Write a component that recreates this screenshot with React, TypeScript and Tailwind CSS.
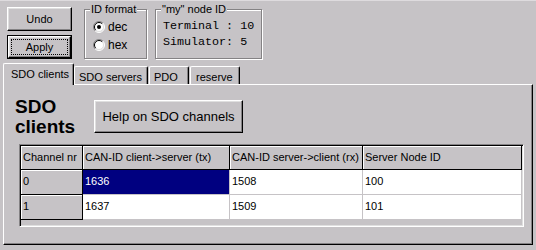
import React from "react";

const raised =
  "border border-t-white border-l-white border-r-black border-b-black shadow-[inset_-1px_-1px_0_#848284,inset_1px_1px_0_#dfdfdf]";

function Radio({ checked }: { checked: boolean }) {
  return (
    <svg width="12" height="12" viewBox="0 0 12 12">
      <circle cx="6" cy="6" r="5" fill="white" />
      <path d="M2.1 9.9 A5.5 5.5 0 0 1 9.9 2.1" stroke="#848284" fill="none" />
      <path d="M9.9 2.1 A5.5 5.5 0 0 1 2.1 9.9" stroke="white" fill="none" />
      <path d="M2.8 9.2 A4.5 4.5 0 0 1 9.2 2.8" stroke="black" fill="none" />
      <path d="M9.2 2.8 A4.5 4.5 0 0 1 2.8 9.2" stroke="#dfdfdf" fill="none" />
      {checked && <circle cx="6" cy="6" r="2" fill="black" />}
    </svg>
  );
}

function GroupBox({ label, className, children }: { label: string; className: string; children: React.ReactNode }) {
  return (
    <div className={`relative border border-[#848284] shadow-[inset_1px_1px_0_white,1px_1px_0_white] ${className}`}>
      <span className="absolute -top-[7px] left-[5px] bg-[#c6c3c6] px-[1px] text-[11px] leading-[13px]">{label}</span>
      {children}
    </div>
  );
}

const fixedCell = "bg-[#c6c3c6] border-r border-b border-black shadow-[inset_1px_1px_0_white] pl-[2px] pt-[4px]";
const dataCell = "bg-white border-r border-b border-[#c6c3c6] pl-[2px] pt-[4px]";

const rows = [
  { ch: "0", tx: "1636", rx: "1508", node: "100" },
  { ch: "1", tx: "1637", rx: "1509", node: "101" },
];

export default function App() {
  return (
    <div
      className="w-[536px] h-[250px] bg-[#c6c3c6] border-t border-[#dedbde] overflow-hidden text-black text-[11px] leading-[14px]"
      style={{ fontFamily: '"Liberation Sans", Arial, sans-serif' }}
    >
      {/* top controls */}
      <div className="flex h-[62px] pl-[7px] pt-[6px]">
        <div className="flex flex-col gap-[4px] w-[65px]">
          <button className={`h-[24px] flex items-center justify-center ${raised}`}>Undo</button>
          <div className="h-[24px] border border-black">
            <button className={`w-full h-full p-[2px] ${raised}`}>
              <div className="w-full h-full border border-dotted border-black flex items-center justify-center">Apply</div>
            </button>
          </div>
        </div>

        <GroupBox label="ID format" className="ml-[12px] mt-[2px] w-[63px] h-[50px]">
          <div className="flex flex-col pl-[8px] pt-[11px] gap-[6px]">
            <div className="flex items-center gap-[3px] h-[12px]">
              <Radio checked />
              <span className="text-[12px]">dec</span>
            </div>
            <div className="flex items-center gap-[3px] h-[12px]">
              <Radio checked={false} />
              <span className="text-[12px]">hex</span>
            </div>
          </div>
        </GroupBox>

        <GroupBox label={'"my" node ID'} className="ml-[8px] mt-[2px] w-[107px] h-[50px]">
          <div
            className="pl-[7px] pt-[8px] text-[11.7px] leading-[16px] whitespace-pre"
            style={{ fontFamily: '"Liberation Mono", "Courier New", monospace' }}
          >
            <div>Terminal : 10</div>
            <div>Simulator: 5</div>
          </div>
        </GroupBox>
      </div>

      {/* tabs */}
      <div className="flex items-end h-[21px] pl-[3px]">
        <div className="relative z-10 -mb-px w-[71px] h-[22px] bg-[#c6c3c6] border-l border-t border-r border-t-white border-l-white border-r-black shadow-[inset_-1px_0_0_#848284] rounded-t-[2px] pl-[7px] pt-[3px]">
          SDO clients
        </div>
        <div className="w-[74px] h-[18px] border-l border-t border-r border-t-white border-l-white border-r-black shadow-[inset_-1px_0_0_#848284] rounded-t-[2px] pl-[4px] pt-[3px]">
          SDO servers
        </div>
        <div className="ml-[1px] w-[40px] h-[18px] border-l border-t border-r border-t-white border-l-white border-r-black shadow-[inset_-1px_0_0_#848284] rounded-t-[2px] pl-[4px] pt-[3px]">
          PDO
        </div>
        <div className="ml-[1px] w-[50px] h-[18px] border-l border-t border-r border-t-white border-l-white border-r-black shadow-[inset_-1px_0_0_#848284] rounded-t-[2px] pl-[5px] pt-[3px]">
          reserve
        </div>
      </div>

      {/* panel */}
      <div className="ml-[3px] w-[530px] h-[161px] border border-t-white border-l-white border-r-black border-b-black shadow-[inset_-1px_-1px_0_#848284] pl-[11px] pt-[12px]">
        <div className="flex items-start">
          <div className="w-[79px] text-[19px] leading-[20px] font-bold">
            SDO
            <br />
            clients
          </div>
          <button className={`mt-[3px] w-[149px] h-[33px] text-[13px] flex items-center justify-center ${raised}`}>
            Help on SDO channels
          </button>
        </div>

        <div className="ml-[4px] mt-[7px] w-[505px] h-[83px] p-[1px] border border-t-[#848284] border-l-[#848284] border-r-white border-b-white shadow-[inset_1px_1px_0_black,inset_-1px_-1px_0_#dfdfdf]">
          <div className="flex h-[24px]">
            <div className={`w-[62px] ${fixedCell}`}>Channel nr</div>
            <div className={`w-[147px] ${fixedCell}`}>CAN-ID client-&gt;server (tx)</div>
            <div className={`w-[133px] ${fixedCell}`}>CAN-ID server-&gt;client (rx)</div>
            <div className={`w-[159px] ${fixedCell}`}>Server Node ID</div>
          </div>
          {rows.map((r, i) => (
            <div key={r.ch} className="flex h-[25px]">
              <div className={`w-[62px] ${fixedCell}`}>{r.ch}</div>
              <div
                className={`w-[147px] pl-[2px] pt-[4px] border-r border-b ${
                  i === 0 ? "bg-[#000080] text-white border-[#c6c3c6]" : "bg-white border-[#c6c3c6]"
                }`}
              >
                {r.tx}
              </div>
              <div className={`w-[133px] ${dataCell}`}>{r.rx}</div>
              <div className={`w-[159px] ${dataCell}`}>{r.node}</div>
            </div>
          ))}
        </div>
      </div>
    </div>
  );
}
